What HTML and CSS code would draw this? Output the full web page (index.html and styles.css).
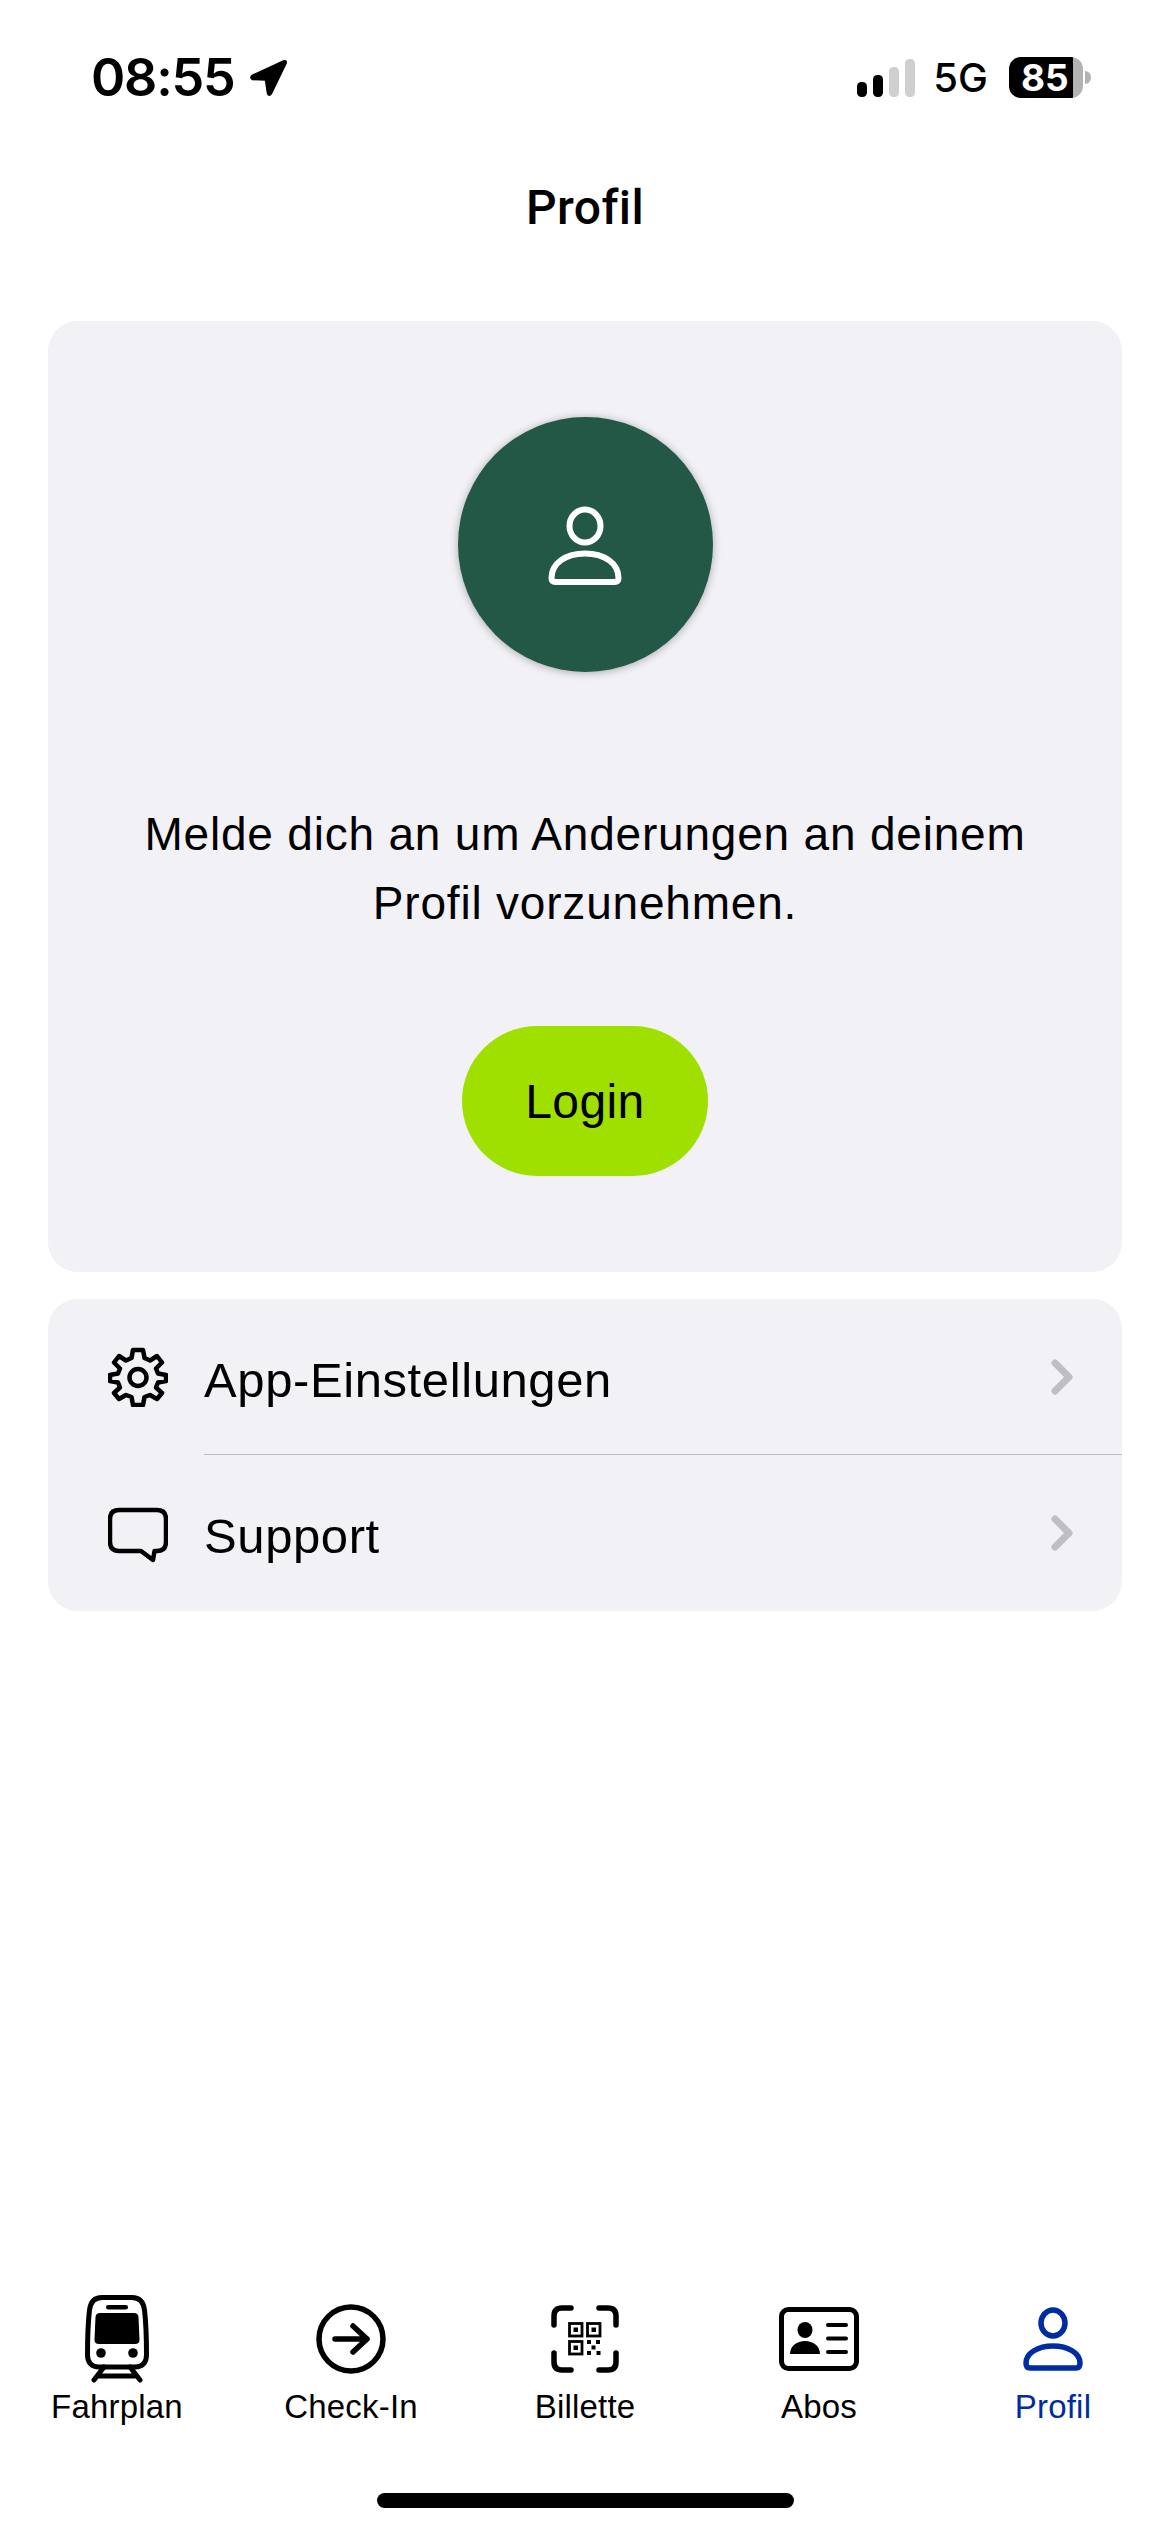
FILE: index.html
```html
<!DOCTYPE html>
<html lang="de">
<head>
  <meta charset="UTF-8">
  <meta name="viewport" content="width=device-width, initial-scale=1.0">
  <title>Profil</title>
  <link rel="stylesheet" href="styles.css">
</head>
<body>
  <div class="status">
    <div class="status-left">
      <span class="time">08:55</span>
      <svg class="arrow" viewBox="0 0 39 38"><path d="M3 16.500 L34.500 2 Q38 1 37 4.500 L22.500 34.500 Q20 38 18.500 34.500 L16.500 21 L3.500 20.500 Q0.500 19 3 16.500 Z" fill="#000" stroke="#000" stroke-width="1.500" stroke-linejoin="round"/></svg>
    </div>
    <div class="status-right">
      <svg class="signal" viewBox="0 0 58 38">
        <rect x="0" y="23" width="10" height="15" rx="4.500" fill="#000"/>
        <rect x="16" y="16" width="10" height="22" rx="4.500" fill="#000"/>
        <rect x="32" y="8" width="10" height="30" rx="4.500" fill="#cfcfcf"/>
        <rect x="48" y="0" width="10" height="38" rx="4.500" fill="#cfcfcf"/>
      </svg>
      <span class="network">5G</span>
      <div class="battery"><span class="battery-level">85</span></div>
      <div class="battery-tip"></div>
    </div>
  </div>

  <h1 class="title">Profil</h1>

  <main class="content">
    <section class="card login-card">
      <div class="avatar">
        <svg class="avatar-icon" viewBox="0 0 74 80" fill="none" stroke="#fff" stroke-width="6">
          <ellipse cx="37" cy="21" rx="15.500" ry="16.500"/>
          <path d="M3.500 73 C3.500 58 18 48.500 37 48.500 C56 48.500 70.500 58 70.500 73 Q70.500 77 66.500 77 H7.500 Q3.500 77 3.500 73 Z" stroke-linejoin="round"/>
        </svg>
      </div>
      <p class="login-text">Melde dich an um Anderungen an deinem Profil vorzunehmen.</p>
      <button class="login-btn">Login</button>
    </section>

    <section class="card menu">
      <div class="menu-row">
        <svg class="menu-icon" viewBox="0 0 60 60" fill="none" stroke="#000" stroke-width="4.500" stroke-linejoin="round">
          <path d="M25 3 H35 L36.500 11 L42 13.500 L49 9 L54 15.500 L48 21.500 L50 26.500 L58 28 V34 L50 35.500 L48 40.500 L54 46 L49 52 L42 48 L36.500 50 L35 58 H25 L23.500 50 L18 48 L11 52 L6 46 L12 40.500 L10 35.500 L2 34 V28 L10 26.500 L12 21.500 L6 15.500 L11 9 L18 13.500 L23.500 11 Z"/>
          <ellipse cx="30" cy="30.500" rx="8.500" ry="8.500"/>
        </svg>
        <span class="menu-label">App-Einstellungen</span>
        <svg class="chevron" viewBox="0 0 24 36" fill="none" stroke="#bebec3" stroke-width="7" stroke-linecap="round" stroke-linejoin="round"><path d="M4 4 L18 18 L4 32"/></svg>
      </div>
      <div class="menu-row">
        <svg class="menu-icon" viewBox="0 0 60 60" fill="none" stroke="#000" stroke-width="4.500" stroke-linejoin="round">
          <path d="M11 7 H49 Q58 7 58 16 V39 Q58 48 49 48 H46.500 L45 57 L33 48 H11 Q2 48 2 39 V16 Q2 7 11 7 Z"/>
        </svg>
        <span class="menu-label">Support</span>
        <svg class="chevron" viewBox="0 0 24 36" fill="none" stroke="#bebec3" stroke-width="7" stroke-linecap="round" stroke-linejoin="round"><path d="M4 4 L18 18 L4 32"/></svg>
      </div>
    </section>
  </main>

  <nav class="tabbar">
    <div class="tab">
      <div class="tab-icon">
        <svg width="64" height="88" viewBox="0 0 64 88">
          <path d="M17 2.500 H47 C55 2.500 58.500 7 59.500 15 C61 28 61.500 45 61.500 60 C61.500 68 57 72 50 72 H14 C7 72 2.500 68 2.500 60 C2.500 45 3 28 4.500 15 C5.500 7 9 2.500 17 2.500 Z" fill="none" stroke="#000" stroke-width="5"/>
          <rect x="21" y="10" width="22" height="4.500" rx="2.250" fill="#000"/>
          <path d="M15 18 H49 Q53 18 53.500 22 L54.500 45 Q54.500 49 50 49 H14 Q9.500 49 9.500 45 L10.500 22 Q11 18 15 18 Z" fill="#000"/>
          <circle cx="16" cy="58" r="4.800" fill="#000"/>
          <circle cx="48" cy="58" r="4.800" fill="#000"/>
          <path d="M19 72 L9 85 M45 72 L55 85 M14 81 H50" fill="none" stroke="#000" stroke-width="5" stroke-linecap="round"/>
        </svg>
      </div>
      <span class="tab-label">Fahrplan</span>
    </div>
    <div class="tab">
      <div class="tab-icon">
        <svg width="70" height="70" viewBox="0 0 70 70" fill="none" stroke="#000" stroke-linecap="round" stroke-linejoin="round">
          <circle cx="35" cy="35" r="32" stroke-width="5.500"/>
          <path d="M19 35 H51 M37 22 L51 35 L37 48" stroke-width="5.500"/>
        </svg>
      </div>
      <span class="tab-label">Check-In</span>
    </div>
    <div class="tab">
      <div class="tab-icon">
        <svg width="68" height="68" viewBox="0 0 68 68">
          <g fill="none" stroke="#000" stroke-width="5.500" stroke-linecap="round">
            <path d="M3 20 V11 Q3 3 11 3 H20 M48 3 H57 Q65 3 65 11 V20 M3 48 V57 Q3 65 11 65 H20 M48 65 H57 Q65 65 65 57 V48"/>
          </g>
          <g fill="none" stroke="#000" stroke-width="2.800">
            <rect x="18.500" y="18.500" width="12.500" height="12.500"/>
            <rect x="36.500" y="18.500" width="12.500" height="12.500"/>
            <rect x="18.500" y="36.500" width="12.500" height="12.500"/>
          </g>
          <g fill="#000">
            <rect x="22.500" y="22.500" width="4.500" height="4.500"/>
            <rect x="40.500" y="22.500" width="4.500" height="4.500"/>
            <rect x="22.500" y="40.500" width="4.500" height="4.500"/>
            <rect x="36" y="35" width="4" height="4"/>
            <rect x="45" y="35" width="4" height="4"/>
            <rect x="40.500" y="40.500" width="4" height="4"/>
            <rect x="36" y="46" width="4" height="4"/>
            <rect x="45.500" y="46" width="4" height="4"/>
          </g>
        </svg>
      </div>
      <span class="tab-label">Billette</span>
    </div>
    <div class="tab">
      <div class="tab-icon">
        <svg width="80" height="64" viewBox="0 0 80 64">
          <rect x="2.500" y="2.500" width="75" height="59" rx="7" fill="none" stroke="#000" stroke-width="5"/>
          <ellipse cx="26" cy="23" rx="7.500" ry="8" fill="#000"/>
          <path d="M11 47 C11 39 18 34 26 34 C34 34 41 39 41 47 Z" fill="#000"/>
          <path d="M49 18 H67 M49 31.500 H67 M49 45 H67" stroke="#000" stroke-width="4" stroke-linecap="round"/>
        </svg>
      </div>
      <span class="tab-label">Abos</span>
    </div>
    <div class="tab tab-active">
      <div class="tab-icon">
        <svg width="60" height="64" viewBox="0 0 60 64" fill="none" stroke="#002ca3" stroke-width="5.500">
          <ellipse cx="30" cy="16" rx="12" ry="13"/>
          <path d="M3 56 C3 46 15 39 30 39 C45 39 57 46 57 56 Q57 61 53 61 H7 Q3 61 3 56 Z" stroke-linejoin="round"/>
        </svg>
      </div>
      <span class="tab-label">Profil</span>
    </div>
  </nav>

  <div class="home-bar"></div>
</body>
</html>
```

FILE: styles.css
```css
* {
  box-sizing: border-box;
}
body {
  font-family: "Liberation Sans", Arial, sans-serif;
  background: #fff;
  color: #000;
  margin: 0;
  width: 1170px;
  height: 2532px;
  display: flex;
  flex-direction: column;
  overflow: hidden;
}
.status {
  display: flex;
  justify-content: space-between;
  align-items: center;
  height: 41px;
  margin-top: 57px;
  padding: 0 79px 0 91px;
}
.status-left {
  display: flex;
  align-items: center;
  gap: 14px;
}
.time {
  font-family: Inter, sans-serif;
  font-size: 52px;
  font-weight: 600;
  line-height: 41px;
  letter-spacing: -1.2px;
}
.arrow {
  width: 39px;
  height: 38px;
}
.status-right {
  display: flex;
  align-items: center;
}
.signal {
  width: 58px;
  height: 38px;
  margin-right: 18px;
}
.network {
  font-family: Inter, sans-serif;
  font-size: 40px;
  font-weight: 500;
  line-height: 41px;
  margin-right: 21px;
}
.battery {
  width: 74px;
  height: 41px;
  border-radius: 12px;
  background: linear-gradient(to right, #000 64px, #b3b3b3 64px);
  display: flex;
  align-items: center;
  padding-left: 12px;
}
.battery-level {
  font-family: Inter, sans-serif;
  font-size: 37px;
  font-weight: 700;
  line-height: 41px;
  color: #fff;
}
.battery-tip {
  width: 6px;
  height: 13px;
  margin-left: 2px;
  border-radius: 0 7px 7px 0;
  background: #b3b3b3;
}
.title {
  font-family: Roboto, sans-serif;
  font-size: 48px;
  font-weight: 500;
  font-variant-ligatures: none;
  line-height: 56px;
  letter-spacing: 0.4px;
  text-align: center;
  margin: 82px 0 0;
}
.content {
  display: flex;
  flex-direction: column;
  gap: 27px;
  padding: 0 48px;
  margin-top: 85px;
}
.card {
  background: #f1f1f6;
  border-radius: 30px;
}
.login-card {
  height: 951px;
  display: flex;
  flex-direction: column;
  align-items: center;
  padding-top: 96px;
}
.avatar {
  width: 255px;
  height: 255px;
  border-radius: 50%;
  background: #235746;
  box-shadow: 0 1px 8px rgba(0,0,0,0.3);
  display: flex;
  align-items: center;
  justify-content: center;
}
.avatar-icon {
  width: 74px;
  height: 80px;
}
.login-text {
  font-size: 46px;
  line-height: 69px;
  letter-spacing: 0.8px;
  text-align: center;
  margin: 128px 0 0;
  width: 900px;
}
.login-btn {
  width: 246px;
  height: 150px;
  margin-top: 88px;
  border: none;
  border-radius: 75px;
  background: #a0e000;
  color: #000;
  font-family: "Liberation Sans", Arial, sans-serif;
  font-size: 48px;
  letter-spacing: 0.4px;
}
.menu {
  height: 312px;
  overflow: hidden;
}
.menu-row {
  height: 156px;
  display: flex;
  align-items: center;
  padding-left: 60px;
  position: relative;
}
.menu-row + .menu-row::before {
  content: "";
  position: absolute;
  top: -1px;
  left: 156px;
  right: 0;
  height: 1px;
  background: #bdbdc2;
}
.menu-icon {
  width: 60px;
  height: 60px;
  flex-shrink: 0;
}
.menu-label {
  font-size: 49px;
  letter-spacing: 0.6px;
  margin-left: 36px;
  padding-top: 6px;
  flex: 1;
}
.chevron {
  width: 24px;
  height: 36px;
  margin-right: 47px;
}
.tabbar {
  display: grid;
  grid-template-columns: repeat(5, 234px);
  margin-top: auto;
}
.tab {
  display: flex;
  flex-direction: column;
  align-items: center;
}
.tab-icon {
  height: 88px;
  display: flex;
  align-items: center;
  justify-content: center;
}
.tab-label {
  font-size: 33px;
  line-height: 40px;
  letter-spacing: 0.2px;
  margin-top: 4px;
}
.tab-active .tab-label {
  color: #002ca3;
}
.home-bar {
  width: 417px;
  height: 15px;
  border-radius: 8px;
  background: #000;
  margin: 66px auto 24px;
}
```
